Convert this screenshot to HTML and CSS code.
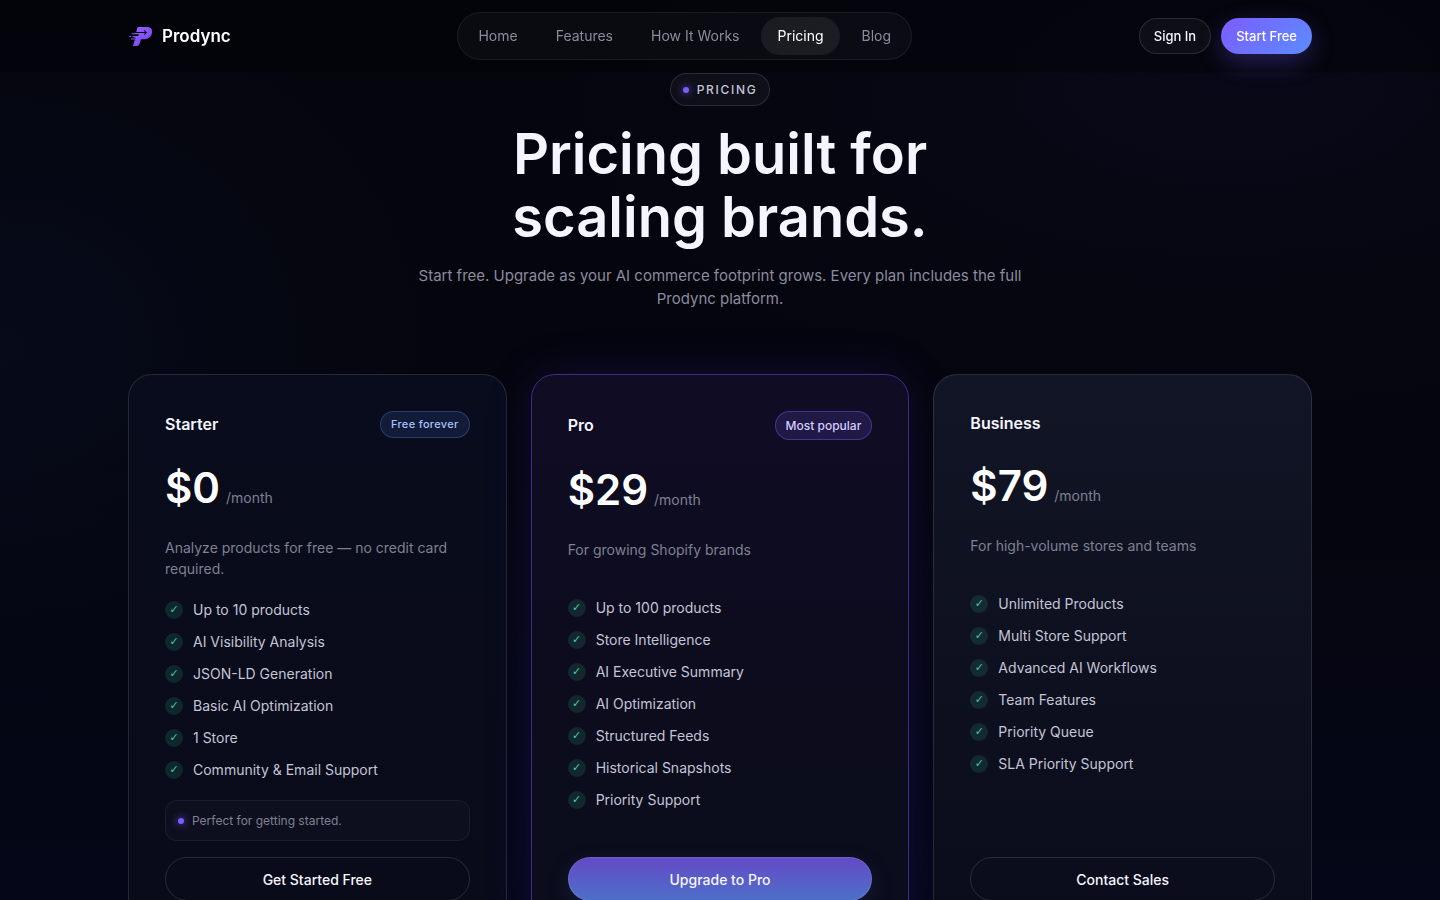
FILE: index.html
```html
<!DOCTYPE html>
<html lang="en">
<head>
    <meta charset="UTF-8">
    <meta name="viewport" content="width=device-width, initial-scale=1.0">
    <title>Pricing - Prodync</title>
    <link rel="stylesheet" href="styles.css">
</head>
<body>
    <header class="site-header">
        <div class="container header-inner">
            <a href="#" class="brand">
                <svg class="brand-mark" viewBox="0 0 26 24" aria-hidden="true">
                    <defs>
                        <linearGradient id="markFill" x1="0" y1="0" x2="1" y2="1">
                            <stop offset="0" stop-color="#9a63ff"/>
                            <stop offset="1" stop-color="#6a45e8"/>
                        </linearGradient>
                    </defs>
                    <path fill="url(#markFill)" d="M10.500 3H19c4 0 5.800 2.600 5 6-.9 4-3.600 6.200-7.500 6.200H13l-1.400 4.600C11 21.600 10 22 8.500 22H5l2.600-8.500H5.500v-1.600h5V10H6.800V8.200h1.400L9 5c.3-1.300.8-2 1.500-2z"/>
                    <path class="mark-cut" d="M7 8.500h11M16 6.500l2.500 2-2.500 2"/>
                    <path class="mark-lines" d="M3.500 9.800h6M1.500 12.500h1.500M4.500 12.500h5M3 15h4"/>
                </svg>
                <span>Prodync</span>
            </a>
            <nav class="nav-links">
                <a href="#">Home</a>
                <a href="#">Features</a>
                <a href="#">How It Works</a>
                <a href="#" class="active">Pricing</a>
                <a href="#">Blog</a>
            </nav>
            <div class="header-actions">
                <button type="button" class="btn-small">Sign In</button>
                <button type="button" class="btn-small btn-gradient">Start Free</button>
            </div>
        </div>
    </header>

    <main class="container">
        <section class="hero">
            <div class="eyebrow"><span class="dot"></span>PRICING</div>
            <h1>Pricing built for<br>scaling brands.</h1>
            <p>Start free. Upgrade as your AI commerce footprint grows. Every plan includes the full Prodync platform.</p>
        </section>

        <section class="plans">
            <article class="plan plan-starter">
                <div class="plan-head">
                    <h2>Starter</h2>
                    <span class="badge badge-blue">Free forever</span>
                </div>
                <div class="price"><strong>$0</strong><span>/month</span></div>
                <p class="plan-desc">Analyze products for free — no credit card required.</p>
                <ul class="features">
                    <li>Up to 10 products</li>
                    <li>AI Visibility Analysis</li>
                    <li>JSON-LD Generation</li>
                    <li>Basic AI Optimization</li>
                    <li>1 Store</li>
                    <li>Community &amp; Email Support</li>
                </ul>
                <div class="note"><span class="dot"></span>Perfect for getting started.</div>
                <button type="button" class="btn-plan">Get Started Free</button>
            </article>

            <article class="plan plan-pro">
                <div class="plan-head">
                    <h2>Pro</h2>
                    <span class="badge badge-purple">Most popular</span>
                </div>
                <div class="price"><strong>$29</strong><span>/month</span></div>
                <p class="plan-desc">For growing Shopify brands</p>
                <ul class="features">
                    <li>Up to 100 products</li>
                    <li>Store Intelligence</li>
                    <li>AI Executive Summary</li>
                    <li>AI Optimization</li>
                    <li>Structured Feeds</li>
                    <li>Historical Snapshots</li>
                    <li>Priority Support</li>
                </ul>
                <button type="button" class="btn-plan btn-plan-pro">Upgrade to Pro</button>
            </article>

            <article class="plan plan-business">
                <div class="plan-head">
                    <h2>Business</h2>
                </div>
                <div class="price"><strong>$79</strong><span>/month</span></div>
                <p class="plan-desc">For high-volume stores and teams</p>
                <ul class="features">
                    <li>Unlimited Products</li>
                    <li>Multi Store Support</li>
                    <li>Advanced AI Workflows</li>
                    <li>Team Features</li>
                    <li>Priority Queue</li>
                    <li>SLA Priority Support</li>
                </ul>
                <button type="button" class="btn-plan">Contact Sales</button>
            </article>
        </section>
    </main>
</body>
</html>
```
FILE: styles.css
```css
* {
    box-sizing: border-box;
}

body {
    margin: 0;
    min-height: 100vh;
    font-family: 'Inter', 'Liberation Sans', sans-serif;
    color: #f5f5ff;
    background:
        radial-gradient(ellipse 600px 500px at 0% 34%, rgba(30, 60, 150, 0.09), transparent 75%),
        radial-gradient(ellipse 900px 450px at 85% 8%, rgba(60, 50, 150, 0.08), transparent 75%),
        linear-gradient(180deg, #04050d 45%, #05061a);
}

h1,
h2,
p,
ul {
    margin: 0;
    padding: 0;
}

button {
    font-family: inherit;
    cursor: pointer;
}

.container {
    width: 100%;
    max-width: 1280px;
    margin: 0 auto;
    padding: 0 48px;
}

/* Header */
.site-header {
    position: fixed;
    top: 0;
    left: 0;
    right: 0;
    z-index: 10;
    background: rgba(3, 3, 9, 0.6);
    border-bottom: 1px solid rgba(255, 255, 255, 0.01);
}

.header-inner {
    display: flex;
    align-items: center;
    justify-content: space-between;
    height: 72px;
}

.brand {
    display: flex;
    align-items: center;
    gap: 8px;
    color: #fff;
    font-size: 17px;
    font-weight: 600;
    text-decoration: none;
}

.brand-mark {
    width: 26px;
    height: 24px;
    fill: none;
}

.mark-cut {
    stroke: #05050d;
    stroke-width: 1;
}

.mark-lines {
    stroke: #8257f5;
    stroke-width: 1;
}

.nav-links {
    display: flex;
    gap: 6px;
    padding: 4px;
    background: rgba(255, 255, 255, 0.03);
    border: 1px solid rgba(255, 255, 255, 0.07);
    border-radius: 24px;
}

.nav-links a {
    padding: 0 16px;
    border-radius: 19px;
    color: #8b8b9e;
    font-size: 14px;
    line-height: 38px;
    text-decoration: none;
}

.nav-links a:hover {
    color: #fff;
}

.nav-links a.active {
    color: #fff;
    background: rgba(255, 255, 255, 0.07);
}

.header-actions {
    display: flex;
    gap: 10px;
}

.btn-small {
    height: 36px;
    padding: 0 14px;
    border: 1px solid rgba(255, 255, 255, 0.12);
    border-radius: 18px;
    background: rgba(255, 255, 255, 0.04);
    color: #f5f5ff;
    font-size: 13px;
    font-weight: 500;
}

.btn-gradient {
    border-color: transparent;
    background: linear-gradient(135deg, #7c5cff, #5b8cff) border-box;
    color: #fff;
    box-shadow: 0 8px 24px rgba(124, 92, 255, 0.3);
}

/* Hero */
.hero {
    display: flex;
    flex-direction: column;
    align-items: center;
    padding-top: 73px;
    text-align: center;
}

.dot {
    flex: none;
    width: 6px;
    height: 6px;
    border-radius: 50%;
    background: #7c5cff;
    box-shadow: 0 0 8px #7c5cff;
}

.eyebrow {
    display: flex;
    align-items: center;
    gap: 8px;
    padding: 0 12px;
    border: 1px solid rgba(255, 255, 255, 0.12);
    border-radius: 17px;
    background: rgba(255, 255, 255, 0.04);
    color: #c4c4d6;
    font-size: 12px;
    font-weight: 500;
    line-height: 31px;
    letter-spacing: 0.14em;
}

.hero h1 {
    margin-top: 17px;
    font-size: 56px;
    font-weight: 600;
    line-height: 63px;
}

.hero p {
    max-width: 620px;
    margin-top: 15px;
    color: #8b8b9e;
    font-size: 15px;
    line-height: 23px;
}

/* Plans */
.plans {
    display: grid;
    grid-template-columns: repeat(3, 1fr);
    gap: 24px;
    padding: 64px 0 80px;
}

.plan {
    display: flex;
    flex-direction: column;
    padding: 36px;
    border: 1px solid rgba(255, 255, 255, 0.12);
    border-radius: 24px;
}

.plan-starter {
    background: linear-gradient(180deg, #090c1c, #090b19);
}

.plan-pro {
    border-color: #3d2e80;
    background: linear-gradient(180deg, #100c24, #0b0c1c 70%);
    box-shadow: 0 0 48px rgba(90, 60, 255, 0.16);
}

.plan-business {
    background: linear-gradient(180deg, #121525, #0a0c1b);
}

.plan-head {
    display: flex;
    align-items: center;
    justify-content: space-between;
}

.plan-head h2 {
    font-size: 16px;
    font-weight: 600;
    line-height: 25px;
}

.badge {
    padding: 0 10px;
    border: 1px solid;
    border-radius: 15px;
    font-weight: 500;
}

.badge-blue {
    border-color: rgba(91, 140, 255, 0.3);
    background: rgba(91, 140, 255, 0.12);
    color: #a9c1ff;
    font-size: 11px;
    line-height: 25px;
    letter-spacing: 0.03em;
}

.badge-purple {
    border-color: rgba(124, 92, 255, 0.4);
    background: rgba(124, 92, 255, 0.16);
    color: #d6ccff;
    font-size: 12px;
    line-height: 27px;
}

.price {
    display: flex;
    align-items: baseline;
    gap: 6px;
    margin-top: 20px;
    line-height: 60px;
}

.price strong {
    color: #fff;
    font-size: 42px;
    font-weight: 600;
}

.price span {
    color: #7f8092;
    font-size: 14px;
}

.plan-desc {
    min-height: 38px;
    margin: 9px 0 20px;
    color: #7f8092;
    font-size: 14px;
    line-height: 21px;
}

.features {
    display: flex;
    flex-direction: column;
    gap: 10px;
    list-style: none;
}

.features li {
    display: flex;
    align-items: center;
    gap: 10px;
    color: #c4c4d6;
    font-size: 14px;
    line-height: 22px;
}

.features li::before {
    content: "✓";
    width: 18px;
    height: 18px;
    border-radius: 50%;
    background: rgba(52, 211, 153, 0.14);
    color: #4cc99a;
    font-family: 'DejaVu Sans', sans-serif;
    font-size: 11px;
    line-height: 18px;
    text-align: center;
}

.note {
    display: flex;
    align-items: center;
    gap: 8px;
    margin: 19px 0 16px;
    padding: 0 12px;
    border: 1px solid rgba(255, 255, 255, 0.06);
    border-radius: 12px;
    background: rgba(255, 255, 255, 0.02);
    color: #7f8092;
    font-size: 12px;
    line-height: 39px;
}

.btn-plan {
    height: 44px;
    margin-top: auto;
    border: 1px solid rgba(255, 255, 255, 0.12);
    border-radius: 22px;
    background: transparent;
    color: #f5f5ff;
    font-size: 14px;
    font-weight: 500;
}

.btn-plan-pro {
    border-color: rgba(255, 255, 255, 0.1);
    background: linear-gradient(180deg, #6549c6, #4c70c8) border-box;
    box-shadow: 0 8px 24px rgba(76, 112, 200, 0.16);
}

@media (max-width: 960px) {
    .nav-links {
        display: none;
    }

    .plans {
        grid-template-columns: 1fr;
    }
}
```
